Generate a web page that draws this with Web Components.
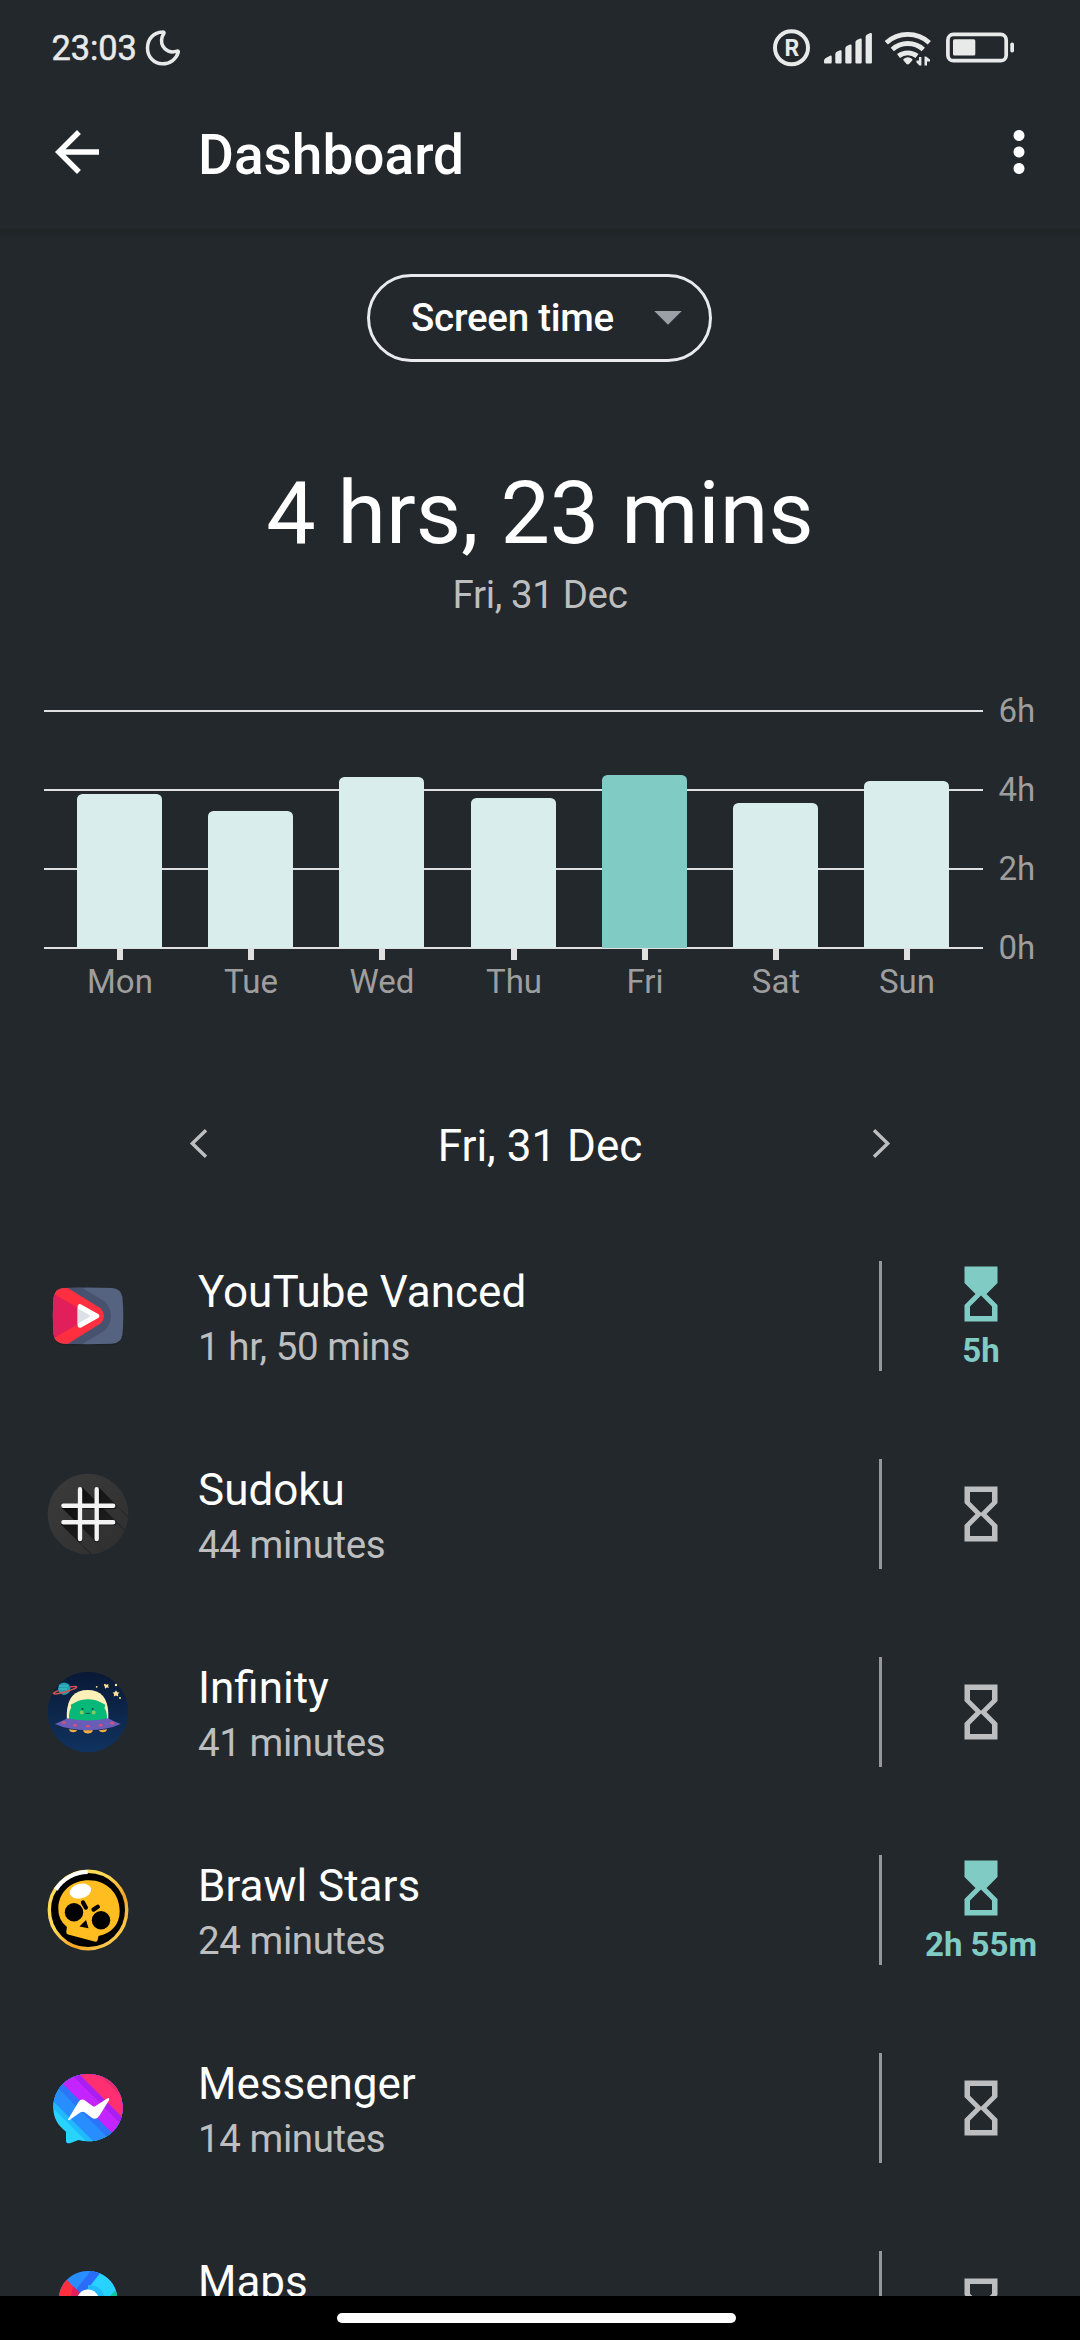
<!DOCTYPE html>
<html lang="en">
<head>
<meta charset="utf-8">
<title>Dashboard</title>
<style>
html,body{margin:0;padding:0}
body{width:1080px;height:2340px;overflow:hidden;background:#23282c;color:#fff;font-family:Roboto,"Noto Sans",sans-serif}
</style>
</head>
<body>
<wellbeing-screen></wellbeing-screen>
<script>
function define(name, html) {
  customElements.define(name, class extends HTMLElement {
    constructor() {
      super();
      this.attachShadow({mode: 'open'}).innerHTML = typeof html === 'function' ? html(this) : html;
    }
  });
}

define('status-bar', `
<style>
:host{display:flex;box-sizing:border-box;height:75px;padding:20px 65px 0 51.500px;align-items:center;color:#e8eaea}
.time{font-size:34.4px;line-height:40px;padding-top:1px;-webkit-text-stroke:.5px #e8eaea;letter-spacing:-.1px}
.moon{margin-left:8px}
.right{margin-left:auto;display:flex;align-items:center}
svg{display:block;overflow:visible}
</style>
<span class="time">23:03</span>
<svg class="moon" width="36" height="36" viewBox="0 0 36 36"><path d="M17.6 2.1C8.6 2.5 2.5 9 2.5 18c0 9 6.500 15.800 15 15.800 7.500 0 13.500-4.300 15.800-11.500.3-1-.4-1.500-1.400-1.100-9.600 3-17.500-4.800-14.800-14.100.5-1.600 1.300-2.700 1.800-3.600.4-.8 0-1.500-1.300-1.400z" fill="none" stroke="#e8eaea" stroke-width="3.500" stroke-linejoin="round"/></svg>
<svg class="right" width="243" height="40" viewBox="772 27.500 243 40" fill="#e8eaea">
<circle cx="791.5" cy="47.300" r="16.500" fill="none" stroke="#e8eaea" stroke-width="4"/>
<text x="791.900" y="55.600" text-anchor="middle" font-size="23" font-weight="700">R</text>
<path d="M824 60.500q0-2 1.800-3l4.200-2.200q1.700-.7 1.700 1V62q0 1-1 1h-5.700q-1 0-1-1zM835.300 53.500q0-1.500 1.500-2.300l3.200-1.400q1.600-.5 1.600 1V62q0 1-1 1h-4.300q-1 0-1-1zM845.300 47.700q0-1.500 1.500-2.300l3.200-1.400q1.600-.5 1.600 1V62q0 1-1 1h-4.300q-1 0-1-1zM855.400 41.800q0-1.500 1.500-2.300l3.200-1.400q1.600-.5 1.600 1V62q0 1-1 1h-4.300q-1 0-1-1zM865.600 36.200q0-1.500 1.500-2.300l3.200-1.400q1.600-.5 1.600 1V62q0 1-1 1h-4.300q-1 0-1-1z"/>
<g fill="none" stroke="#e8eaea" stroke-width="4.800"><path d="M886.300 42.200A32 32 0 0 1 929.300 42.200"/><path d="M892.300 49A23 23 0 0 1 923.300 49"/><path d="M898.500 55.500A15 15 0 0 1 917 55.500"/></g>
<path d="M903.500 58.600Q907.800 55 912.300 58.600 912.700 59.500 912 60.300L909 63.500Q907.800 64.400 906.600 63.500L903.800 60.300Q902.900 59.500 903.500 58.600Z"/>
<path d="M916.500 60h2.500v-3.500h2.400V65h-2L916.500 62zM924.500 56h1.500l4 3v2h-3v4h-2.500z"/>
<rect x="947.900" y="33.900" width="58.300" height="26.300" rx="5.500" fill="none" stroke="#e8eaea" stroke-width="3.700"/>
<rect x="953" y="38.800" width="22.300" height="16.200" rx="1.500"/><rect x="1010.300" y="42" width="3.700" height="10" rx="1.700"/>
</svg>`);

define('app-bar', `
<style>
:host{display:flex;height:154px;align-items:center;padding:0 28px 0 44px}
svg{display:block;fill:#fff}
h1{margin:0 auto 0 88px;padding-top:6px;font-size:55px;line-height:64px;font-weight:500}
</style>
<svg width="66" height="66" viewBox="0 0 24 24"><path d="M20 11H7.830l5.590-5.590L12 4l-8 8 8 8 1.410-1.410L7.830 13H20v-2z"/></svg>
<h1><slot></slot></h1>
<svg width="66" height="66" viewBox="0 0 24 24"><path d="M12 8c1.100 0 2-.9 2-2s-.9-2-2-2-2 .9-2 2 .9 2 2 2zm0 2c-1.100 0-2 .9-2 2s.9 2 2 2 2-.9 2-2-.9-2-2-2zm0 6c-1.100 0-2 .9-2 2s.9 2 2 2 2-.9 2-2-.9-2-2-2z"/></svg>`);

define('metric-picker', `
<style>
:host{display:flex;box-sizing:border-box;width:345px;height:88px;margin:45px 0 0 367px;padding:0 27px 0 41px;align-items:center;justify-content:space-between;border:3px solid #e8eaed;border-radius:44px;font-size:38.500px;font-weight:500;line-height:46px;letter-spacing:-.25px}
svg{display:block}
</style>
<slot></slot><svg width="28" height="14" viewBox="0 0 28 14"><path d="M.25 0h27.500L14 13.750z" fill="#9aa0a6"/></svg>`);

define('usage-total', `
<style>
:host{display:block;text-align:center;margin-top:99px}
.total{font-size:88px;line-height:104px}
.date{font-size:38.500px;line-height:46px;margin-top:7px;color:#bdbebf;letter-spacing:-.38px}
</style>
<div class="total"><slot></slot></div><div class="date"><slot name="date"></slot></div>`);

const week = [['Mon',154],['Tue',137],['Wed',171],['Thu',150],['Fri',173],['Sat',145],['Sun',167]];
define('week-chart', `
<style>
:host{display:flex;margin:92px 0 0 44px;height:292px;color:#9e9e9e;font-size:33px}
.main{width:939px}
.plot{display:grid;height:239px}
.lines,.bars{grid-area:1/1;display:flex}
.lines{flex-direction:column;justify-content:space-between}
.lines i{height:2px;background:#e0e0e0}
.bars{align-items:flex-end;padding:0 0 1px 33px;gap:46px}
.bars i{width:85px;border-radius:5.500px 5.500px 0 0;background:#d9eeec}
.bars i.on{background:#80cbc4}
.n3{margin-left:1px}
.days{display:flex;padding-left:10.500px}
.days div{width:131px;display:flex;flex-direction:column;align-items:center;line-height:40px}
.days i{width:6px;height:11px;background:#e0e0e0;margin-bottom:1.700px}
.axis{margin:-39.500px 0 0 15.500px}
.axis div{height:79px;line-height:79px}
</style>
<div class="main">
<div class="plot"><div class="lines"><i></i><i></i><i></i><i></i></div>
<div class="bars">${week.map((d,i)=>`<i class="n${i}${i===4?' on':''}" style="height:${d[1]}px"></i>`).join('')}</div></div>
<div class="days">${week.map((d,i)=>`<div class="n${i}"><i></i>${d[0]}</div>`).join('')}</div>
</div>
<div class="axis"><div>6h</div><div>4h</div><div>2h</div><div>0h</div></div>`);

define('date-nav', `
<style>
:host{display:flex;height:86px;margin:98px 171px 31px;align-items:center;justify-content:space-between;font-size:44px}
span{padding-top:6px;line-height:52px}
svg{display:block;fill:none;stroke:#bdbebf;stroke-width:3.400}
</style>
<svg width="57" height="57" viewBox="0 0 57 57"><path d="M35 15.300L21.300 28.500 35 41.700"/></svg>
<span><slot></slot></span>
<svg width="57" height="57" viewBox="0 0 57 57"><path d="M22 15.300L35.700 28.500 22 41.700"/></svg>`);

const art = {
vanced: `<defs><clipPath id="c"><path d="M20 15.900Q44 15.300 68 15.900Q77 16.500 78.400 25Q80.200 44 78.400 63Q77 71.300 68 71.800Q44 72.500 20 71.800Q11 71.300 9.700 63Q8 44 9.700 25Q11 16.500 20 15.900Z"/></clipPath></defs>
<path d="M20 17Q44 16.400 68 17Q77 17.600 78.400 26Q80.200 45 78.400 64Q77 72.500 68 73Q44 73.700 20 73Q11 72.500 9.700 64Q8 45 9.700 26Q11 17.600 20 17Z" fill="#1a1d21" opacity=".6"/>
<g clip-path="url(#c)"><path d="M0 0h88v88H0z" fill="#566380"/><path d="M20 5L61 29.500Q73 44 61 58.500L20 83z" fill="#47526f"/><path d="M0 5H6L56.500 36.300Q63.500 44 56.500 51.500L6 83H0z" fill="#ff2f40"/><path d="M5 19L48 44 5 69z" fill="#e01f5b"/></g>
<path d="M36 34.600v18.800L53 44z" fill="#fff" stroke="#fff" stroke-width="4.800" stroke-linejoin="round"/><path d="M33.700 36.300L47 44 33.700 51.800z" fill="#dce1e8"/>`,
sudoku: `<defs><linearGradient id="g" x1="0" y1="0" x2="1" y2="1"><stop stop-color="#3b3b3b"/><stop offset="1" stop-color="#2f2f2f"/></linearGradient><linearGradient id="s" gradientUnits="userSpaceOnUse" x1="28" y1="28" x2="72" y2="72"><stop stop-color="#101010"/><stop offset="1" stop-color="#232323"/></linearGradient><clipPath id="c"><circle cx="44" cy="44" r="40.300"/></clipPath></defs>
<circle cx="44" cy="44" r="40.300" fill="url(#g)"/>
<g clip-path="url(#c)" fill="url(#s)"><path d="M38 17l80 80v54L34 71zM54.500 17l80 80v54L51 71zM17.500 37.500l80 80H151L71 34zM16 53.500l80 80h54L71 51z"/></g>
<path d="M36 20v50M52.700 20v50M20 36.700h50M20 53h50" stroke="#000" stroke-opacity=".5" stroke-width="5" stroke-linecap="round"/>
<path d="M36 19.300v49.800M52.700 19.300v49.800M19.400 35.800h49.800M19.400 52.200h49.800" stroke="#f3f3f3" stroke-width="4.400" stroke-linecap="round"/>`,
infinity: `<defs><linearGradient id="g" x2="0" y2="1"><stop stop-color="#091936"/><stop offset="1" stop-color="#10335f"/></linearGradient></defs>
<circle cx="44" cy="44" r="40.300" fill="url(#g)"/>
<circle cx="20.200" cy="20.700" r="6.200" fill="#269cad"/><path d="M15 18h9M14.300 21h9" stroke="#43c2cb" stroke-width="1.200"/><path d="M14.500 22.600Q8.500 25 9.600 25.600C12 27.200 34 20.800 32.600 18.700Q31.500 17.900 26 19" fill="none" stroke="#d8524f" stroke-width="1.500"/>
<g fill="#ffe39b"><circle cx="52.700" cy="18.800" r=".9"/><path d="M60.400 15.800l2.100 1 2-.8-.4 2 .9 1.800-2.200-.3-1.800 1.200-.2-2-.9-1.600z"/><circle cx="72" cy="17" r="1.200"/><path d="M72 22.200l1.200 2 2.300.2-1.500 1.700.3 2.300-2.300-.8-2.200.9.300-2.300-1.500-1.700 2.200-.3z"/><circle cx="76" cy="30" r="1"/></g>
<path d="M22.800 54V45Q24 22 43.700 22T64.300 45V54Z" fill="#fff0b9"/>
<path d="M25 55V47Q25.500 42 27.200 39.500L26.800 36.800 32 34Q37 31.200 44 31.200T56 34L61.300 36.800 60.500 40Q62.700 43 62.900 47V55z" fill="#08b879"/>
<path d="M11 56Q17 53.500 23.500 50.200 44 55 64 50.200 70 53.500 76.700 56 64 62 44 62.300 24 62 11 56z" fill="#695db8"/>
<path d="M25 61.300l8.200.9q-.8 2-4 2-3.700 0-4.200-2.900zM39 62.300h10q-1 3.300-5 3.300t-5-3.300zM54.800 62.200l8.300-.9q-.5 2.900-4.200 2.900-3.300 0-4.100-2z" fill="#f2ad43"/>
<g fill="#dc4f78"><ellipse cx="19.700" cy="54.600" rx="2" ry="1.400"/><ellipse cx="31" cy="57.200" rx="2" ry="1.300"/><ellipse cx="44" cy="58.300" rx="2" ry="1.300"/><ellipse cx="56.700" cy="57.300" rx="2" ry="1.300"/><ellipse cx="68" cy="55.200" rx="2" ry="1.400"/></g>
<circle cx="38.500" cy="41" r="1.100" fill="#164a45"/><circle cx="48.700" cy="41" r="1.100" fill="#164a45"/><circle cx="37.700" cy="44.500" r="1.900" fill="#8bc95d"/><circle cx="49.700" cy="44.500" r="1.900" fill="#8bc95d"/><path d="M41.800 45q1.200 1.500 2.200 0 1 1.500 2.200 0" fill="none" stroke="#164a45" stroke-width=".9"/>`,
brawl: `<defs><linearGradient id="g" x2="1" y2="1"><stop offset=".4" stop-color="#ffda57"/><stop offset=".65" stop-color="#f4a522"/><stop offset="1" stop-color="#ffe36b"/></linearGradient></defs>
<circle cx="44" cy="44" r="38.700" fill="#000" stroke="url(#g)" stroke-width="3.400"/><path d="M11.800 23.600A38 38 0 0 1 43.700 6" fill="none" stroke="#fff" stroke-width="4.200"/>
<path d="M14.300 42C15 25 28 14.300 45 14.300S75.700 27 75.700 45C75.700 59 67 67.500 54.500 70L53.500 74.500Q52.700 76.200 50.500 75.600L24 68.500Q22 67.900 22.300 66L22.900 61Q14 54 14.300 42z" fill="#ffbd20"/>
<ellipse cx="36.400" cy="25.100" rx="11" ry="7.200" fill="#fff" transform="rotate(-14 36.400 25.100)"/><circle cx="30" cy="46.300" r="9.200"/><circle cx="57" cy="54.200" r="9.200"/><path d="M42 54l2.500 8.300-9-1.700z"/><path d="M39 36.500l2.800 5M49.500 43.600l4.300-2.800" stroke="#000" stroke-width="4.300" stroke-linecap="round"/>`,
messenger: `<defs><clipPath id="c"><path d="M44 10C63.500 10 78.700 24.500 78.700 43.700S63.500 77.300 44 77.300Q39 77.300 34.500 76L26 79.200Q22 80 22 76.500V67.700C14 61.500 9.300 54 9.300 43.700 9.300 24.500 24.500 10 44 10z"/></clipPath></defs>
<g clip-path="url(#c)"><path d="M0 0h88v88H0z" fill="#29d3ff"/><path d="M-40 -5h300v300z" fill="#20b9fc"/><path d="M-28 0L72 100H200V0z" fill="#288dff"/><path d="M-10 0L90 100H200V0z" fill="#2a75fa"/><path d="M-1 0L99 100H200V0z" fill="#c424ff"/><path d="M17 0L117 100H200V0z" fill="#a91ff2"/><path d="M25 0L125 100H200V0z" fill="#ff2f72"/><path d="M45 0L145 100H200V0z" fill="#e82c69"/></g>
<path d="M24.500 54.500L34.500 38Q37.600 33.800 41.700 37L48.500 42Q50 43 51.500 42L63.500 34.200Q66 33.500 65 36.300L55.500 51.500Q52 57 47.500 53.500L40.500 48.300Q38.500 47 36.500 48.300L25.500 56Q22.800 56.600 24.500 54.500Z" fill="#fff"/>`,
maps: `<defs><clipPath id="c"><path d="M44 9C60.500 9 73.300 21.500 73.300 38 73.300 59 44 82 44 82S14.700 59 14.700 38C14.700 21.500 27.500 9 44 9z"/></clipPath></defs>
<g clip-path="url(#c)"><path d="M0 0h88v88H0z" fill="#288dff"/><path d="M56 0L34 33l10 6 40-5V0z" fill="#28d2ff"/><path d="M50 5l5.500 7L38 34 31 29z" fill="#2a6bf8"/><path d="M44 23q15 0 17 15H44z" fill="#20b9fc"/><path d="M23 18L0 0V60H40V36z" fill="#ff2f40"/><path d="M29 24L36 31 34 42 26 40z" fill="#e01f5b"/><path d="M75 25L66 34V50h20z" fill="#10c596"/></g><circle cx="44" cy="38.500" r="11" fill="#fff"/>`
};

define('app-icon', el => `
<style>:host{display:block;width:88px;height:88px}svg{display:block}</style>
<svg width="88" height="88" viewBox="0 0 88 88">${art[el.getAttribute('name')]}</svg>`);

define('app-timer', el => {
  const limit = el.getAttribute('limit');
  return `
<style>
:host{display:flex;flex-direction:column;width:198px;align-items:center;color:#80cbc4;font-size:33px;font-weight:700;line-height:40px}
svg{display:block;fill:${limit ? '#80cbc4' : '#bdbebf'}}
div{margin-top:4px}
</style>
<svg width="66" height="66" viewBox="0 0 24 24"><path fill-rule="evenodd" d="M6 2v6h.010L6 8.010 10 12l-4 4 .010.010H6V22h12v-5.990h-.010L18 16l-4-4 4-3.990-.010-.010H18V2H6zm10 14.500V20H8v-3.500l4-4 4 4z${limit ? '' : 'M12 11.500l-4-4V4h8v3.500l-4 4z'}"/></svg>
${limit ? `<div>${limit}</div>` : ''}`;
});

define('app-row', el => `
<style>
:host{display:flex;height:198px;align-items:center;padding-left:44px}
.text{flex:1;padding:4px 0 0 66px}
.name{font-size:44px;line-height:52px}
.used{font-size:38.500px;line-height:46px;min-height:46px;margin-top:6px;color:#bdbebf;letter-spacing:-.42px}
.rule{width:3px;height:110px;background:#95989a}
</style>
<app-icon name="${el.getAttribute('icon')}"></app-icon>
<div class="text"><div class="name"><slot></slot></div><div class="used">${el.getAttribute('used') || ''}</div></div>
<div class="rule"></div>
<app-timer ${el.hasAttribute('limit') ? `limit="${el.getAttribute('limit')}"` : ''}></app-timer>`);

define('gesture-bar', `
<style>
:host{display:flex;height:44px;flex:none;background:#000}
i{width:399px;height:10px;margin:17px 0 0 337px;border-radius:5px;background:#fff}
</style><i></i>`);

define('wellbeing-screen', `
<style>
:host{display:flex;flex-direction:column;width:1080px;height:2340px;overflow:hidden}
status-bar,app-bar,metric-picker,usage-total,week-chart,date-nav{flex:none}
.shade{height:12px;margin-bottom:-12px;flex:none;background:linear-gradient(#1f2427,#23282c)}
.list{flex:1;min-height:0;overflow:hidden}
</style>
<status-bar></status-bar>
<app-bar>Dashboard</app-bar>
<div class="shade"></div>
<metric-picker>Screen time</metric-picker>
<usage-total>4 hrs, 23 mins<span slot="date">Fri, 31 Dec</span></usage-total>
<week-chart></week-chart>
<date-nav>Fri, 31 Dec</date-nav>
<div class="list">
<app-row icon="vanced" used="1 hr, 50 mins" limit="5h">YouTube Vanced</app-row>
<app-row icon="sudoku" used="44 minutes">Sudoku</app-row>
<app-row icon="infinity" used="41 minutes">Infinity</app-row>
<app-row icon="brawl" used="24 minutes" limit="2h 55m">Brawl Stars</app-row>
<app-row icon="messenger" used="14 minutes">Messenger</app-row>
<app-row icon="maps">Maps</app-row>
</div>
<gesture-bar></gesture-bar>`);
</script>
</body>
</html>
